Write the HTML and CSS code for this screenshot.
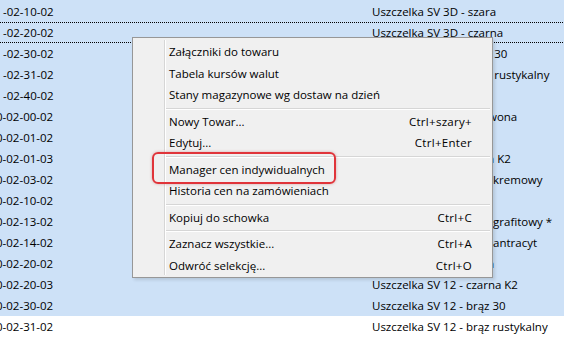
FILE: index.html
```html
<!DOCTYPE html>
<html lang="pl">
<head>
  <meta charset="UTF-8" />
  <title>Towary - menu kontekstowe</title>
  <link rel="stylesheet" href="styles.css">
</head>
<body>

  <div class="list">
    <div class="row"><span class="code">-02-10-02</span><span class="name">Uszczelka SV 3D - szara</span></div>
    <div class="row focus"><span class="code">-02-20-02</span><span class="name">Uszczelka SV 3D - czarna</span></div>
    <div class="row"><span class="code">-02-30-02</span><span class="name">Uszczelka SV 3D - brąz 30</span></div>
    <div class="row"><span class="code">-02-31-02</span><span class="name">Uszczelka SV 3D - brąz rustykalny</span></div>
    <div class="row"><span class="code">-02-40-02</span><span class="name">Uszczelka SV 3D - beż</span></div>
    <div class="row"><span class="code"><span class="cut">0</span>-02-00-02</span><span class="name">Uszczelka SV 12 - czerwona</span></div>
    <div class="row"><span class="code"><span class="cut">0</span>-02-01-02</span><span class="name">Uszczelka SV 12 - brąz</span></div>
    <div class="row"><span class="code"><span class="cut">0</span>-02-01-03</span><span class="name">Uszczelka SV 12 - szara K2</span></div>
    <div class="row"><span class="code"><span class="cut">0</span>-02-03-02</span><span class="name">Uszczelka SV 12 - mat. kremowy</span></div>
    <div class="row"><span class="code"><span class="cut">0</span>-02-10-02</span><span class="name">Uszczelka SV 12 - beż</span></div>
    <div class="row"><span class="code"><span class="cut">0</span>-02-13-02</span><span class="name">Uszczelka SV 12 - mat. grafitowy *</span></div>
    <div class="row"><span class="code"><span class="cut">0</span>-02-14-02</span><span class="name">Uszczelka SV 12 - mat. antracyt</span></div>
    <div class="row"><span class="code"><span class="cut">0</span>-02-20-02</span><span class="name">Uszczelka SV 12 - szara</span></div>
    <div class="row"><span class="code"><span class="cut">0</span>-02-20-03</span><span class="name">Uszczelka SV 12 - czarna K2</span></div>
    <div class="row"><span class="code"><span class="cut">0</span>-02-30-02</span><span class="name">Uszczelka SV 12 - brąz 30</span></div>
    <div class="row plain"><span class="code"><span class="cut">0</span>-02-31-02</span><span class="name">Uszczelka SV 12 - brąz rustykalny</span></div>
  </div>

  <div class="menu">
    <div class="item"><span>Załączniki do towaru</span></div>
    <div class="item"><span>Tabela kursów walut</span></div>
    <div class="item"><span>Stany magazynowe wg dostaw na dzień</span></div>
    <div class="sep"></div>
    <div class="item"><span>Nowy Towar...</span><span class="key">Ctrl+szary+</span></div>
    <div class="item"><span>Edytuj...</span><span class="key">Ctrl+Enter</span></div>
    <div class="sep"></div>
    <div class="item marked"><span>Manager cen indywidualnych</span></div>
    <div class="item"><span>Historia cen na zamówieniach</span></div>
    <div class="sep"></div>
    <div class="item"><span>Kopiuj do schowka</span><span class="key">Ctrl+C</span></div>
    <div class="sep"></div>
    <div class="item"><span>Zaznacz wszystkie...</span><span class="key">Ctrl+A</span></div>
    <div class="item"><span>Odwróć selekcję...</span><span class="key">Ctrl+O</span></div>
  </div>

</body>
</html>
```

FILE: styles.css
```css
html, body {
  margin: 0;
  height: 100%;
  overflow: hidden;
}

body {
  font-family: 'Segoe UI', 'Open Sans', sans-serif;
  font-size: 11.5px;
  color: #000;
  background: #fff;
}

.list {
  background: #cde1f7;
  padding-top: 1px;
}

.row {
  display: flex;
  height: 21px;
  line-height: 21px;
  white-space: nowrap;
  overflow: hidden;
}

.row.plain {
  background: #fff;
}

.row.focus {
  background-image:
    linear-gradient(90deg, #000 50%, transparent 50%),
    linear-gradient(90deg, #000 50%, transparent 50%);
  background-size: 2px 1px, 2px 1px;
  background-repeat: repeat-x;
  background-position: 0 0, 0 100%;
}

.code {
  width: 369px;
  padding-left: 3px;
  flex-shrink: 0;
}

.cut {
  margin-left: -7px;
}

.menu {
  position: absolute;
  left: 132px;
  top: 37px;
  width: 361px;
  box-sizing: border-box;
  background: #f0f0f0;
  border: 1px solid #979797;
  padding: 3px 0 1px;
  box-shadow: 2px 2px 3px rgba(0, 0, 0, 0.12);
}

.menu::before {
  content: "";
  position: absolute;
  left: 31px;
  top: 2px;
  bottom: 2px;
  width: 1px;
  background: #d6d6d6;
  box-shadow: 1px 0 0 #fff;
}

.item {
  position: relative;
  display: flex;
  align-items: center;
  justify-content: space-between;
  height: 21.5px;
  padding: 0 20px 0 36px;
  white-space: nowrap;
}

.key {
  letter-spacing: 0.3px;
}

.sep {
  display: flex;
  align-items: center;
  height: 5px;
  padding: 0 2px 0 32px;
}

.sep::after {
  content: "";
  flex: 1;
  height: 1px;
  background: #d6d6d6;
  box-shadow: 0 1px 0 #fff;
}

.marked::after {
  content: "";
  position: absolute;
  left: 19px;
  top: -7px;
  width: 184px;
  height: 32px;
  box-sizing: border-box;
  border: 2px solid #e0343a;
  border-radius: 6px;
  box-shadow: 0 0 3px rgba(160, 40, 40, 0.35);
}
```
